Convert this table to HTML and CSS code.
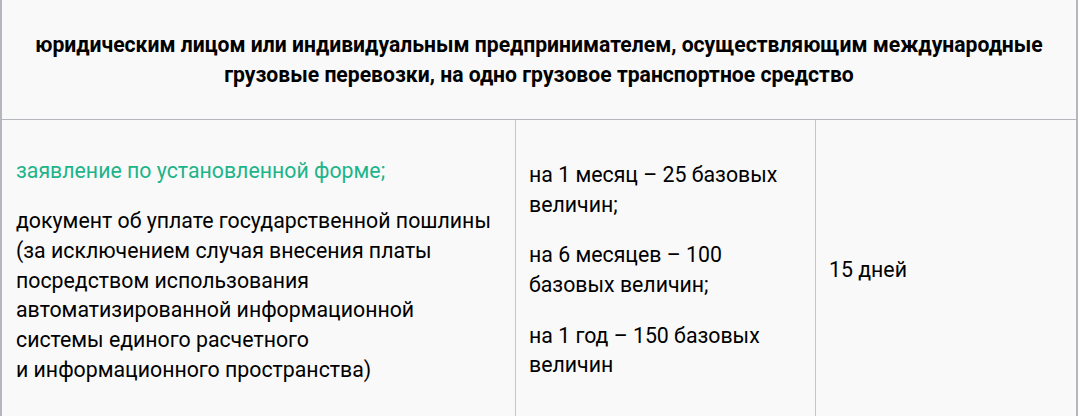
FILE: index.html
```html
<!DOCTYPE html>
<html lang="ru">
<head>
<meta charset="utf-8">
<title>Таблица</title>
<link rel="stylesheet" href="styles.css">
</head>
<body>
<div class="table">
  <div class="head">юридическим лицом или индивидуальным предпринимателем, осуществляющим международные<br>грузовые перевозки, на одно грузовое транспортное средство</div>
  <div class="row">
    <div class="cell cell-docs">
      <p class="link">заявление по установленной форме;</p>
      <p>документ об уплате государственной пошлины<br>(за исключением случая внесения платы<br>посредством использования<br>автоматизированной информационной<br>системы единого расчетного<br>и информационного пространства)</p>
    </div>
    <div class="cell cell-fee">
      <p>на 1 месяц – 25 базовых<br>величин;</p>
      <p>на 6 месяцев – 100<br>базовых величин;</p>
      <p>на 1 год – 150 базовых<br>величин</p>
    </div>
    <div class="cell cell-term">
      <p>15 дней</p>
    </div>
  </div>
</div>
</body>
</html>
```

FILE: styles.css
```css
html, body {
  margin: 0;
  padding: 0;
  background: #ffffff;
}

body {
  font-family: Roboto, "Liberation Sans", Arial, sans-serif;
  color: #000;
}

.table {
  width: 1078px;
  box-sizing: border-box;
  background: #f9f9f9;
  border-left: 2px solid #b4b7bc;
  border-right: 2px solid #b4b7bc;
}

.head {
  height: 120px;
  box-sizing: border-box;
  border-bottom: 1px solid #b4b7bc;
  display: flex;
  align-items: center;
  justify-content: center;
  text-align: center;
  font-weight: 700;
  font-size: 21.15px;
  line-height: 30px;
}

.row {
  display: grid;
  grid-template-columns: 514px 300px 1fr;
  height: 300px;
}

.cell {
  display: flex;
  flex-direction: column;
  justify-content: center;
  padding: 0 13px;
  font-size: 21.3px;
  line-height: 29.7px;
}

.cell-docs,
.cell-fee {
  border-right: 1px solid #c4c6c9;
}

.cell-docs {
  padding-left: 14px;
}

.cell p {
  margin: 0 0 21px;
}

.cell p:last-child {
  margin-bottom: 0;
}

.link {
  color: #1db48a;
}
```
